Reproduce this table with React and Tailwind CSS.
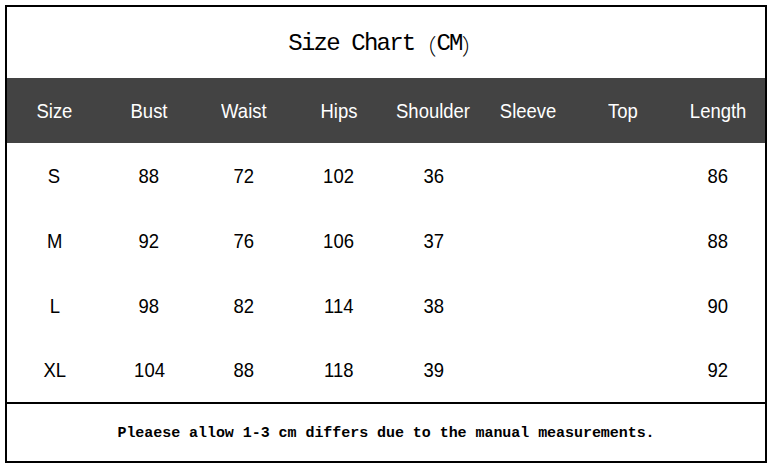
const columns = ['Size', 'Bust', 'Waist', 'Hips', 'Shoulder', 'Sleeve', 'Top', 'Length'];

const rows = [
  ['S', '88', '72', '102', '36', '', '', '86'],
  ['M', '92', '76', '106', '37', '', '', '88'],
  ['L', '98', '82', '114', '38', '', '', '90'],
  ['XL', '104', '88', '118', '39', '', '', '92'],
];

function Cell({ children }) {
  return (
    <div className="flex items-center justify-center">
      <span className="inline-block scale-x-[0.88]">{children}</span>
    </div>
  );
}

export default function App() {
  return (
    <div className="w-[772px] h-[466px] bg-white pt-[5px] pl-[5px]">
      <div className="w-[762px] h-[458px] border-2 border-black flex flex-col">
        {/* Title */}
        <div className="h-[71px] pt-[3px] flex items-center justify-center font-['Liberation_Mono',monospace] text-[24px] tracking-[-1.8px] text-black">
          Size Chart
          <span className="font-['Noto_Sans_CJK_SC',sans-serif] tracking-normal text-[22px] font-light">（</span>
          CM
          <span className="font-['Noto_Sans_CJK_SC',sans-serif] tracking-normal text-[22px] font-light">）</span>
        </div>

        {/* Header */}
        <div className="h-[65px] bg-[#434343] grid grid-cols-8 text-white text-[21px] font-['Liberation_Sans',Arial,sans-serif]">
          {columns.map((c) => (
            <Cell key={c}>{c}</Cell>
          ))}
        </div>

        {/* Rows */}
        {rows.map((r, i) => (
          <div
            key={r[0]}
            className={`${i === 3 ? 'h-[64px]' : 'h-[65px]'} grid grid-cols-8 text-black text-[21px] font-['Liberation_Sans',Arial,sans-serif]`}
          >
            {r.map((v, j) => (
              <Cell key={j}>{v}</Cell>
            ))}
          </div>
        ))}

        {/* Footer note */}
        <div className="flex-1 pt-[4px] border-t-2 border-black flex items-center justify-center font-['Liberation_Mono',monospace] font-bold text-[15px] tracking-[-0.05px] text-black">
          Pleaese allow 1-3 cm differs due to the manual measurements.
        </div>
      </div>
    </div>
  );
}
